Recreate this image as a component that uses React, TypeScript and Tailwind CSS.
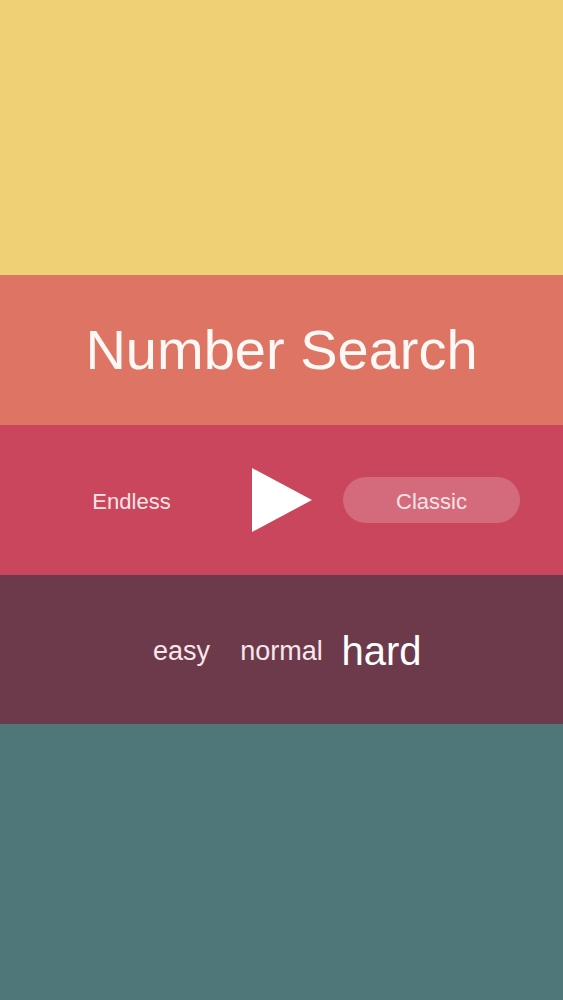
import React from 'react';

const PlayIcon = () => (
  <svg width="62" height="64" viewBox="0 0 62 64" className="block">
    <polygon points="1,0 61,32 1,64" fill="#ffffff" />
  </svg>
);

const App: React.FC = () => {
  return (
    <div
      className="flex flex-col w-full h-[1000px] overflow-hidden text-white"
      style={{ fontFamily: '"Liberation Sans", Arial, sans-serif' }}
    >
      {/* top band */}
      <div className="h-[275px] bg-[#f0d075]" />

      {/* title */}
      <div className="h-[150px] bg-[#de7564] flex items-center justify-center">
        <h1 className="text-[56px] leading-none text-[#fff8f4]">Number Search</h1>
      </div>

      {/* mode row */}
      <div className="h-[150px] bg-[#c9465c] flex items-center justify-center">
        <div className="w-[177px] flex justify-center pt-[3px]">
          <span className="text-[22px] leading-none text-[#fde3e6]">Endless</span>
        </div>
        <div className="w-[123px] flex justify-center">
          <button className="block">
            <PlayIcon />
          </button>
        </div>
        <div className="w-[177px] h-[46px] rounded-full bg-white/20 flex items-center justify-center pt-[3px]">
          <span className="text-[22px] leading-none text-[#fde3e6]">Classic</span>
        </div>
      </div>

      {/* difficulty */}
      <div className="h-[149px] bg-[#6d3a4c] flex items-center justify-center pt-[3px]">
        <div className="w-[100px] flex justify-center">
          <span className="text-[27px] leading-none text-[#f8e6ec]">easy</span>
        </div>
        <div className="w-[100px] flex justify-center">
          <span className="text-[27px] leading-none text-[#f8e6ec]">normal</span>
        </div>
        <div className="w-[100px] flex justify-center">
          <span className="text-[40px] leading-none text-white">hard</span>
        </div>
      </div>

      {/* bottom band */}
      <div className="flex-1 bg-[#4f7678]" />
    </div>
  );
};

export default App;
